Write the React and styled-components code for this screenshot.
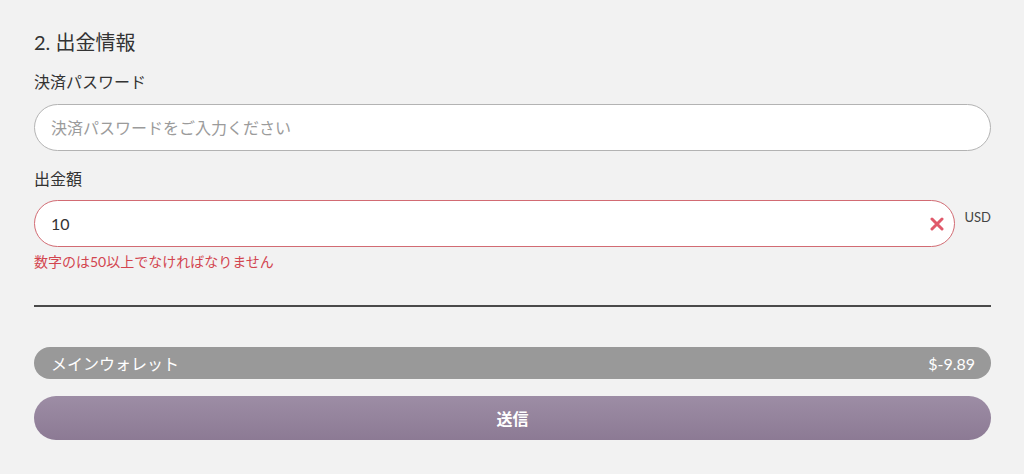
import React, { useState } from "react";
import styled, { createGlobalStyle, css } from "styled-components";

const GlobalStyle = createGlobalStyle`
  body {
    margin: 0;
    background: #f2f2f2;
    font-family: Lato, "Noto Sans CJK JP", sans-serif;
    color: #333;
  }
`;

const Wrapper = styled.form`
  padding: 28px 33px 0 34px;
  display: flex;
  flex-direction: column;
`;

const Title = styled.h2`
  margin: 0 0 14px;
  font-size: 20px;
  line-height: 28px;
  font-weight: 400;
  color: #333;
`;

const Label = styled.label`
  font-size: 16px;
  line-height: 24px;
  font-weight: 400;
  color: #333;
  margin-top: ${({ top }) => top || 0}px;
  margin-bottom: ${({ gap }) => gap}px;
`;

const Row = styled.div`
  display: flex;
  align-items: flex-start;
  gap: 9px;
`;

const InputBox = styled.div`
  position: relative;
  flex: 1 1 auto;
  min-width: 0;
  height: 47px;
  box-sizing: border-box;
  border: 1px solid #b3b3b3;
  border-radius: 24px;
  background: #fff;
  display: flex;
  align-items: center;
  ${({ error }) =>
    error &&
    css`
      border-color: #d26b73;
    `}
`;

const Input = styled.input`
  flex: 1;
  min-width: 0;
  border: none;
  outline: none;
  background: transparent;
  padding: 0 16px;
  font-family: Lato, "Noto Sans CJK JP", sans-serif;
  font-size: 16px;
  color: #333;
  &::placeholder {
    color: #9b9b9b;
  }
`;

const ClearIcon = styled.span`
  position: absolute;
  right: 10px;
  top: 50%;
  transform: translateY(-50%);
  display: flex;
`;

const Unit = styled.span`
  font-size: 13px;
  line-height: 20px;
  color: #444;
  margin-top: 7px;
`;

const ErrorText = styled.p`
  margin: 5px 0 0;
  font-size: 14px;
  line-height: 20px;
  color: #d2454f;
`;

const Divider = styled.hr`
  margin: 33px 0 40px;
  border: none;
  height: 2px;
  background: #4a4a4a;
`;

const WalletBar = styled.div`
  height: 32px;
  border-radius: 16px;
  background: #999;
  color: #fff;
  display: flex;
  align-items: center;
  justify-content: space-between;
  padding: 0 16px 0 17px;
  font-size: 16px;
`;

const SubmitButton = styled.button`
  margin-top: 17px;
  height: 44px;
  border: none;
  border-radius: 22px;
  background: linear-gradient(180deg, #9d8da5 0%, #8c7a94 100%);
  color: #fff;
  font-family: Lato, "Noto Sans CJK JP", sans-serif;
  font-size: 16px;
  font-weight: 700;
  cursor: pointer;
`;

const RoundInput = ({ error, ...rest }) => (
  <InputBox error={error}>
    <Input {...rest} />
    {error && (
      <ClearIcon>
        <svg width="14" height="14" viewBox="0 0 14 14">
          <path
            d="M2 2L12 12M12 2L2 12"
            stroke="#e0596a"
            strokeWidth="3"
            strokeLinecap="round"
          />
        </svg>
      </ClearIcon>
    )}
  </InputBox>
);

export default function App() {
  const [password, setPassword] = useState("");
  const [amount, setAmount] = useState("10");

  return (
    <>
      <GlobalStyle />
      <Wrapper onSubmit={(e) => e.preventDefault()}>
        <Title>2. 出金情報</Title>
        <Label gap={10}>決済パスワード</Label>
        <RoundInput
          type="password"
          placeholder="決済パスワードをご入力ください"
          value={password}
          onChange={(e) => setPassword(e.target.value)}
        />
        <Label top={16} gap={9}>
          出金額
        </Label>
        <Row>
          <RoundInput
            error
            value={amount}
            onChange={(e) => setAmount(e.target.value)}
          />
          <Unit>USD</Unit>
        </Row>
        <ErrorText>数字のは50以上でなければなりません</ErrorText>
        <Divider />
        <WalletBar>
          <span>メインウォレット</span>
          <span>$-9.89</span>
        </WalletBar>
        <SubmitButton type="submit">送信</SubmitButton>
      </Wrapper>
    </>
  );
}
